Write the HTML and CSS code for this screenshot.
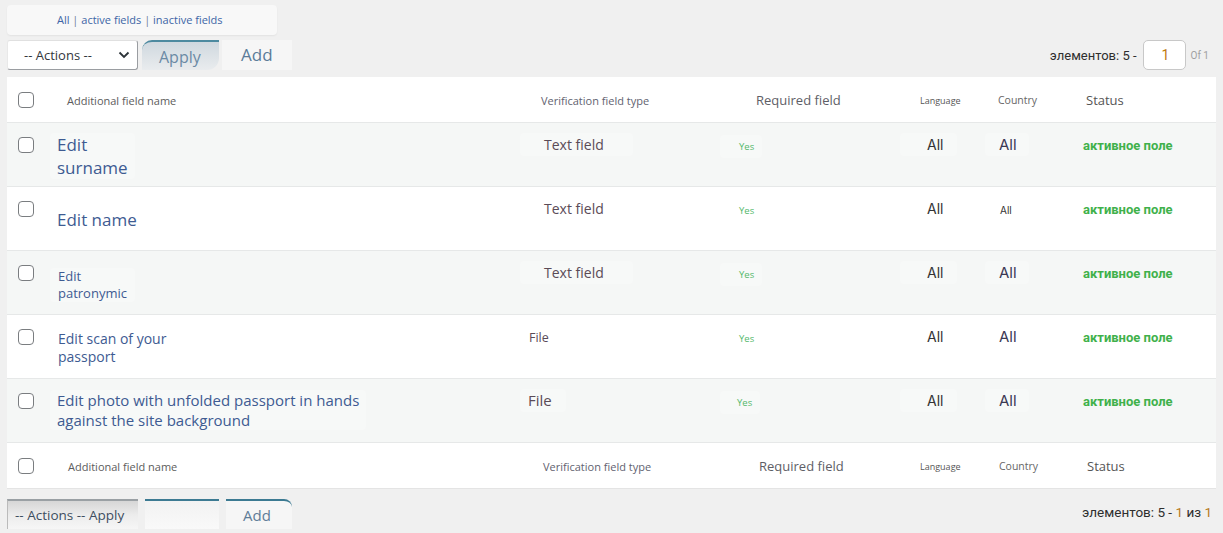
FILE: index.html
```html
<!DOCTYPE html>
<html>
<head>
<meta charset="utf-8">
<link rel="stylesheet" href="styles.css">
</head>
<body>
<div class="page">
  <div class="filters"><a>All</a> | <a>active fields</a> | <a>inactive fields</a></div>

  <div class="toolbar">
    <div class="bulk">
      <div class="select"><span>-- Actions --</span>
        <svg width="14" height="14" viewBox="0 0 14 14"><path d="M2.5 4.5 L7 9 L11.5 4.5" fill="none" stroke="#2c3338" stroke-width="1.8"/></svg>
      </div>
      <div class="btn-apply">Apply</div>
      <div class="btn-add">Add</div>
    </div>
    <div class="pager">
      <span class="count">элементов: 5 -</span>
      <div class="page-input">1</div>
      <span class="of">Of 1</span>
    </div>
  </div>

  <div class="table">
    <div class="row head">
      <div class="c cb"><span class="box"></span></div>
      <div class="c name"><span class="h-name">Additional field name</span></div>
      <div class="c type"><span class="h-type">Verification field type</span></div>
      <div class="c req"><span class="h-req">Required field</span></div>
      <div class="c lang"><span class="h-lang">Language</span></div>
      <div class="c ctry"><span class="h-ctry">Country</span></div>
      <div class="c stat"><span class="h-stat">Status</span></div>
    </div>

    <div class="row alt">
      <div class="c cb"><span class="box"></span></div>
      <div class="c name n1"><a class="patch">Edit<br>surname</a></div>
      <div class="c type"><span class="t-text patch">Text field</span></div>
      <div class="c req"><span class="yes patch">Yes</span></div>
      <div class="c lang"><span class="all-l patch">All</span></div>
      <div class="c ctry"><span class="all-c patch">All</span></div>
      <div class="c stat"><span class="status">активное поле</span></div>
    </div>

    <div class="row">
      <div class="c cb"><span class="box"></span></div>
      <div class="c name n2"><a>Edit name</a></div>
      <div class="c type"><span class="t-text">Text field</span></div>
      <div class="c req"><span class="yes">Yes</span></div>
      <div class="c lang"><span class="all-l">All</span></div>
      <div class="c ctry"><span class="all-small">All</span></div>
      <div class="c stat"><span class="status">активное поле</span></div>
    </div>

    <div class="row alt">
      <div class="c cb"><span class="box"></span></div>
      <div class="c name n3"><a class="patch">Edit<br>patronymic</a></div>
      <div class="c type"><span class="t-text patch">Text field</span></div>
      <div class="c req"><span class="yes patch">Yes</span></div>
      <div class="c lang"><span class="all-l patch">All</span></div>
      <div class="c ctry"><span class="all-c patch">All</span></div>
      <div class="c stat"><span class="status">активное поле</span></div>
    </div>

    <div class="row">
      <div class="c cb"><span class="box"></span></div>
      <div class="c name n4"><a>Edit scan of your<br>passport</a></div>
      <div class="c type"><span class="t-file">File</span></div>
      <div class="c req"><span class="yes">Yes</span></div>
      <div class="c lang"><span class="all-l">All</span></div>
      <div class="c ctry"><span class="all-c">All</span></div>
      <div class="c stat"><span class="status">активное поле</span></div>
    </div>

    <div class="row alt">
      <div class="c cb"><span class="box"></span></div>
      <div class="c name n5"><a class="patch">Edit photo with unfolded passport in hands<br>against the site background</a></div>
      <div class="c type"><span class="t-file2 patch">File</span></div>
      <div class="c req"><span class="yes y5 patch">Yes</span></div>
      <div class="c lang"><span class="all-l patch">All</span></div>
      <div class="c ctry"><span class="all-c patch">All</span></div>
      <div class="c stat"><span class="status">активное поле</span></div>
    </div>

    <div class="row head foot">
      <div class="c cb"><span class="box"></span></div>
      <div class="c name"><span class="h-name">Additional field name</span></div>
      <div class="c type"><span class="h-type">Verification field type</span></div>
      <div class="c req"><span class="h-req">Required field</span></div>
      <div class="c lang"><span class="h-lang">Language</span></div>
      <div class="c ctry"><span class="h-ctry">Country</span></div>
      <div class="c stat"><span class="h-stat">Status</span></div>
    </div>
  </div>

  <div class="toolbar bottom">
    <div class="bulk">
      <div class="b-actions">-- Actions -- Apply</div>
      <div class="b-blank"></div>
      <div class="b-add">Add</div>
    </div>
    <div class="b-pager">элементов: 5 - <span class="num">1</span> из <span class="num">1</span></div>
  </div>
</div>
</body>
</html>
```

FILE: styles.css
```css
* { box-sizing: border-box; }
html, body { margin: 0; padding: 0; }
body {
  background: #f0f0f0;
  font-family: "Open Sans", "Noto Sans", sans-serif;
  color: #333;
  width: 1223px;
  height: 533px;
  overflow: hidden;
}
.page { padding: 5px 7px 0 7px; }

.filters {
  width: 270px;
  height: 30px;
  background: #f8f8f8;
  border-radius: 4px;
  box-shadow: 0 1px 2px rgba(0,0,0,0.06);
  font-size: 11px;
  line-height: 30px;
  padding-left: 50px;
  color: #6b7f99;
}
.filters a { color: #3d65a6; }

.toolbar {
  display: flex;
  justify-content: space-between;
  align-items: center;
  height: 30px;
  margin-top: 5px;
}
.bulk { display: flex; align-items: stretch; height: 30px; }
.select {
  width: 131px;
  height: 30px;
  background: #fff;
  border: 1px solid #9a9da1;
  border-left-color: #e8e8e8;
  border-top-color: #e0e0e0;
  border-radius: 3px;
  display: flex;
  align-items: center;
  justify-content: space-between;
  padding: 0 6px 0 16px;
  font-size: 13px;
  color: #32373c;
}
.btn-apply {
  width: 77px;
  margin-left: 4px;
  background: linear-gradient(180deg, #cfd8df 0%, #dfe4e8 60%, #e9ecee 100%);
  border-top: 2px solid #4d8aa0;
  border-top-left-radius: 10px;
  border-bottom-right-radius: 12px;
  font-size: 16px;
  line-height: 30px;
  padding-left: 17px;
  color: #6b8aa5;
}
.btn-add {
  width: 70px;
  margin-left: 3px;
  background: #f6f6f6;
  font-size: 17px;
  line-height: 30px;
  padding-left: 19px;
  color: #5b7c99;
}
.pager { display: flex; align-items: center; margin-right: 7px; }
.count {
  font-family: "Roboto", "Liberation Sans", sans-serif;
  font-size: 13px;
  font-weight: 400;
  color: #2e2e2e;
}
.page-input {
  width: 43px;
  height: 30px;
  margin-left: 6px;
  background: #fff;
  border: 1px solid #c8c8c8;
  border-radius: 5px;
  font-family: "Roboto", "Liberation Sans", sans-serif;
  font-size: 14px;
  line-height: 28px;
  padding-left: 18px;
  color: #c07a10;
}
.of {
  margin-left: 5px;
  font-family: "Roboto", "Liberation Sans", sans-serif;
  font-size: 10px;
  color: #a0a0a0;
}

.table {
  margin-top: 7px;
  width: 1209px;
  background: #fff;
  border-bottom: 1px solid #e4e4e4;
}
.row {
  display: grid;
  grid-template-columns: 43px 470px 200px 180px 85px 85px 146px;
  height: 64px;
  border-top: 1px solid #e6e8e8;
  background: #fff;
}
.row.alt { background: #f5f7f6; }
.row.head { height: 45px; border-top: none; align-items: center; }
.row.foot { height: 46px; border-top: 1px solid #e6e8e8; }
.c { padding-top: 10px; line-height: 23px; white-space: nowrap; }
.row.head .c { padding-top: 0; }
.c.cb { padding: 14px 0 0 11px; line-height: 0; }
.row.head .c.cb { padding-top: 0; align-self: center; }
.box {
  display: inline-block;
  width: 16px;
  height: 16px;
  border: 1px solid #7a7d80;
  border-radius: 4px;
  background: #fff;
}

.h-name { margin-left: 17px; font-size: 11px; color: #5c5c5c; }
.h-type { margin-left: 21px; font-size: 11px; color: #626270; }
.h-req { margin-left: 36px; font-size: 13px; color: #5e5e66; }
.h-lang { margin-left: 20px; font-size: 9px; color: #555; }
.h-ctry { margin-left: 13px; font-size: 10.5px; color: #666; }
.h-stat { margin-left: 16px; font-size: 13px; color: #555; }
.foot .h-name { margin-left: 18px; }
.foot .h-type { margin-left: 23px; }
.foot .h-req { margin-left: 39px; }
.foot .h-ctry { margin-left: 14px; }
.foot .h-stat { margin-left: 17px; }

.name a { color: #3e5b92; display: inline-block; }
.patch { background: #f7f9f8; border-radius: 4px; }
.n1 { padding-top: 10px; }
.n1 a { font-size: 17px; line-height: 23px; margin-left: 0; padding: 0 7px; }
.n2 { padding-top: 21px; }
.n2 a { font-size: 17px; line-height: 23px; margin-left: 7px; }
.n3 { padding-top: 17px; }
.n3 a { font-size: 13px; line-height: 17px; padding: 0 8px; }
.n4 { padding-top: 15px; }
.n4 a { font-size: 14px; line-height: 18px; margin-left: 8px; }
.n5 { padding-top: 11px; }
.n5 a { font-size: 15px; line-height: 20px; padding: 0 7px; }

.t-text { display: inline-block; font-size: 14px; color: #5a4b57; padding: 0 29px 0 24px; }
.t-file { font-size: 12.5px; color: #5a4b57; margin-left: 9px; }
.t-file2 { display: inline-block; font-size: 15px; color: #5a4b57; padding: 0 14px 0 8px; }
.yes { display: inline-block; font-size: 9.5px; color: #52b86a; padding: 0 8px 0 19px; margin-left: 0; }
.y5 { padding-left: 17px; }
.row:not(.alt) .yes { padding-left: 19px; }

.all-l, .all-c, .all-small {
  display: inline-block;
  font-family: "Inter", "Roboto", sans-serif;
}
.all-l { font-size: 14px; color: #333; padding: 0 14px 0 27px; margin-left: 0; }
.all-c { font-size: 15px; color: #3b3954; padding: 0 12px 0 14px; }
.all-small { font-size: 10px; color: #333; padding-left: 15px; }
.status {
  margin-left: 13px;
  font-family: "Roboto", "Liberation Sans", sans-serif;
  font-weight: 700;
  font-size: 13px;
  color: #3fb14b;
}

.toolbar.bottom { margin-top: 9px; height: 31px; }
.b-actions {
  width: 131px;
  background: linear-gradient(180deg, #d6d6d6 0%, #ececec 50%, #f6f6f6 100%);
  border-top: 2px solid #9aa0a4;
  border-left: 1px solid #bbb;
  font-size: 13.5px;
  line-height: 29px;
  padding-left: 7px;
  color: #3d4d60;
  white-space: nowrap;
}
.b-blank {
  width: 74px;
  margin-left: 7px;
  background: linear-gradient(180deg, #f2f2f2, #f9f9f9);
  border-top: 2px solid #3c7a92;
}
.b-add {
  width: 66px;
  margin-left: 7px;
  background: #f6f6f6;
  border-top: 2px solid #3c7a92;
  border-top-right-radius: 8px;
  font-size: 15px;
  line-height: 29px;
  padding-left: 17px;
  color: #5f7d98;
}
.b-pager {
  font-family: "Roboto", "Liberation Sans", sans-serif;
  font-size: 13.5px;
  font-weight: 400;
  color: #2e2e2e;
  margin-right: 4px;
  margin-top: -4px;
}
.b-pager .num { color: #b87a1c; font-weight: 400; }
```
